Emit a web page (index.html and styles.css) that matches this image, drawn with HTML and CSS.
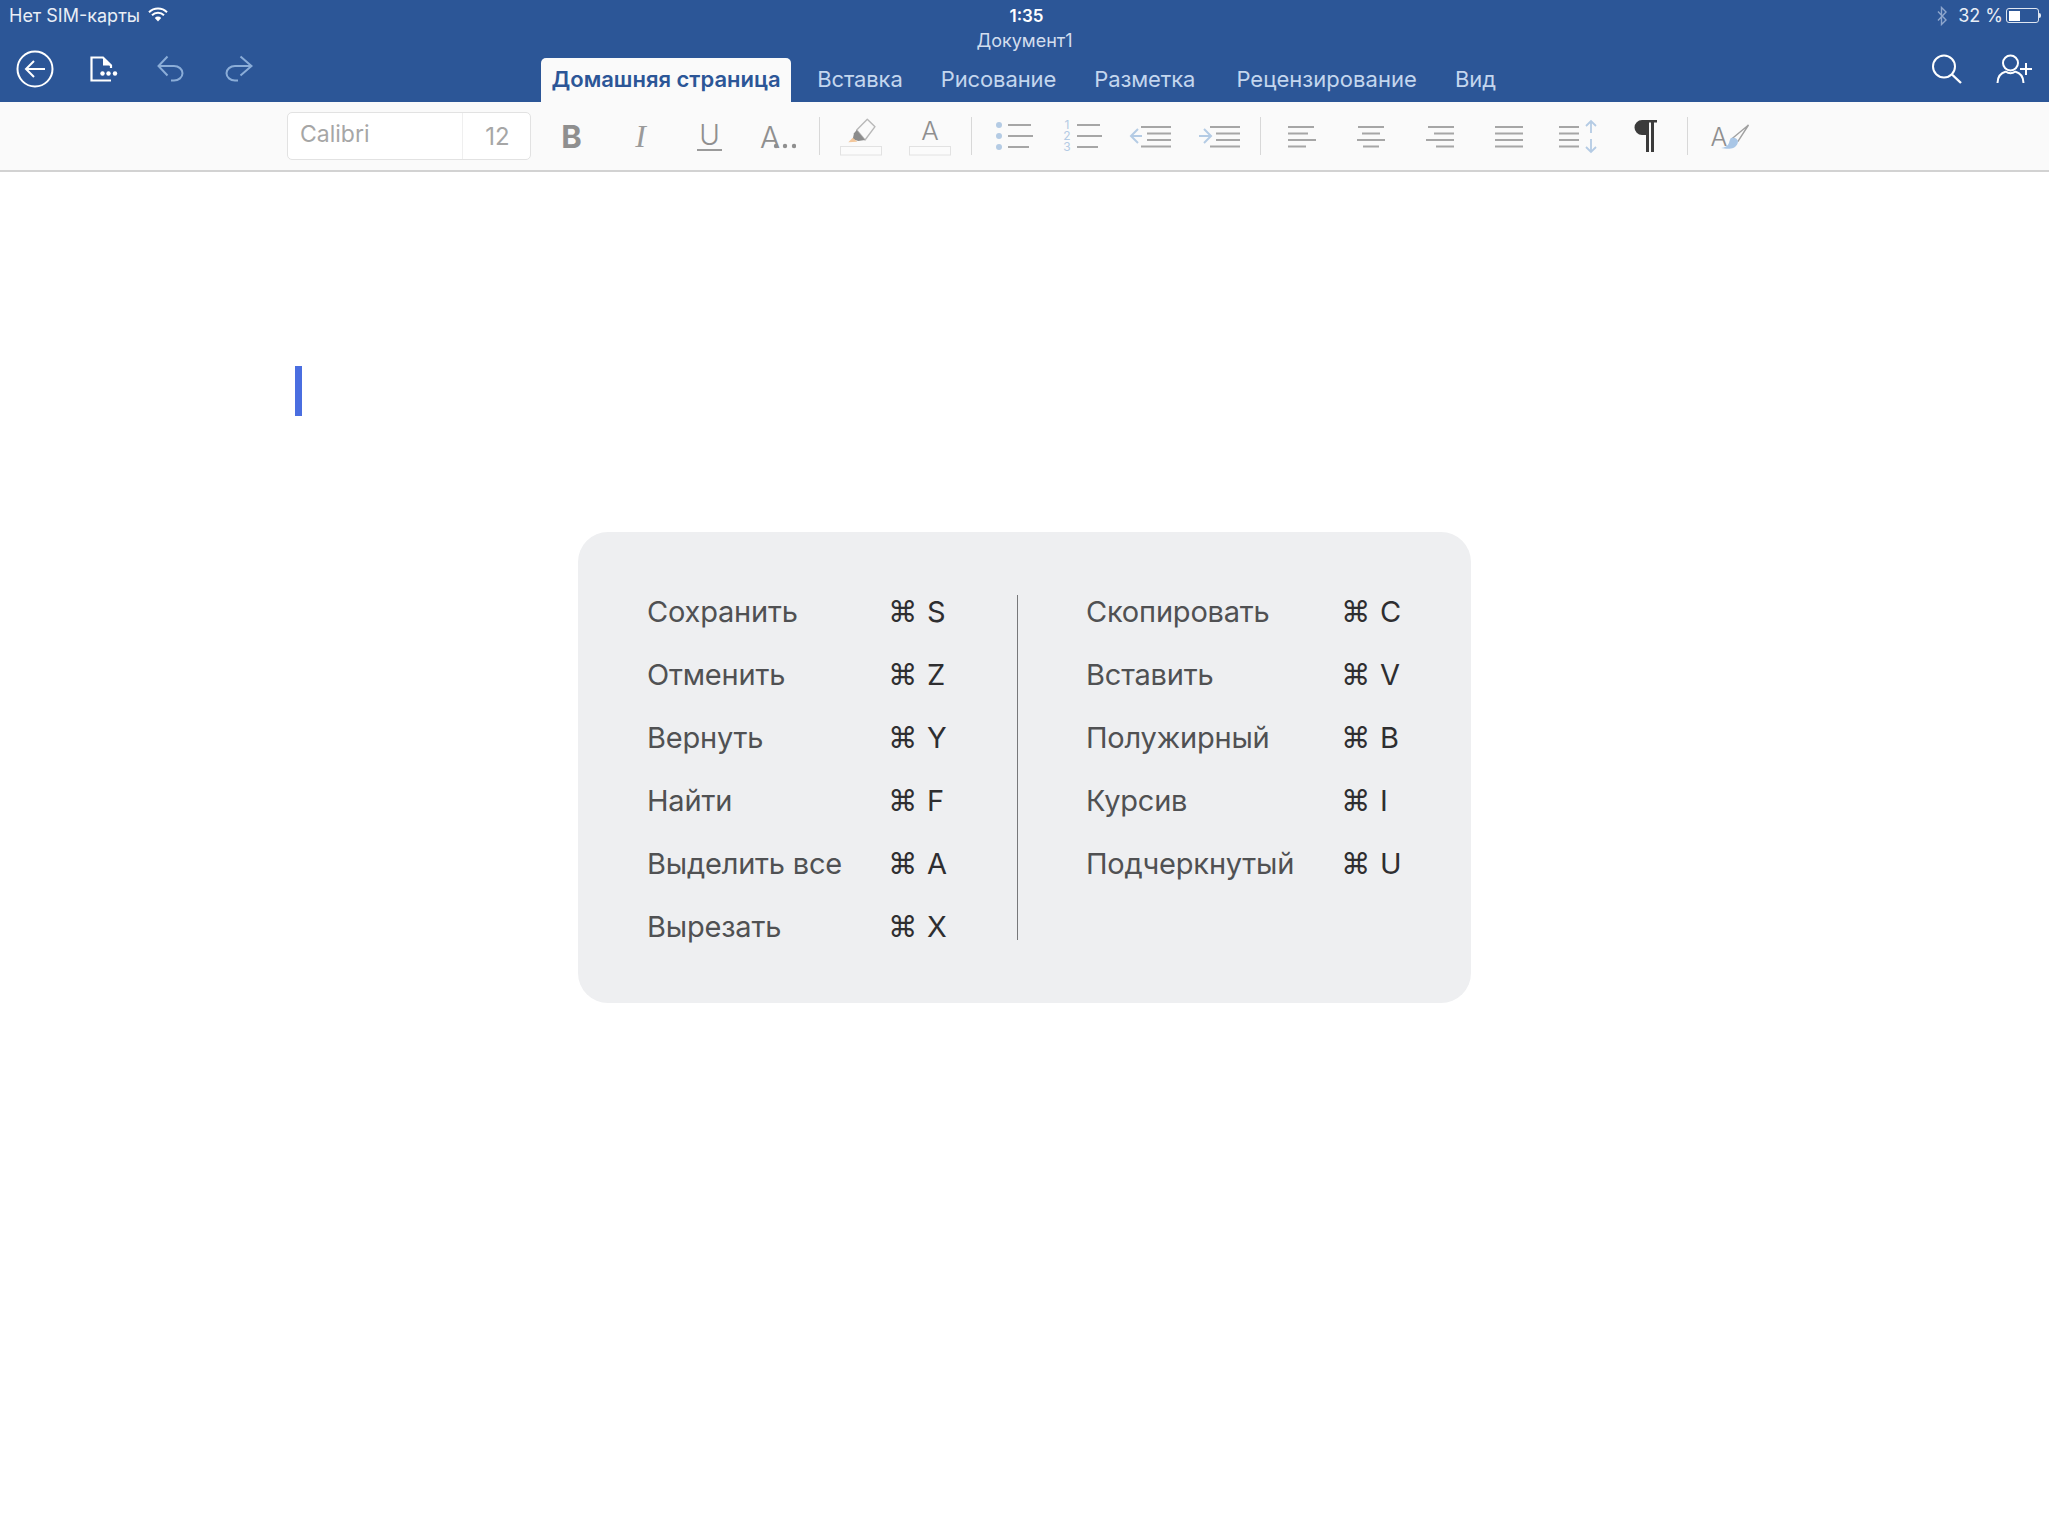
FILE: index.html
```html
<!DOCTYPE html>
<html lang="ru">
<head>
<meta charset="utf-8">
<title>Документ1</title>
<link rel="stylesheet" href="styles.css">
</head>
<body>
<header class="header">
  <div class="status">
    <div class="status-left">
      <span>Нет SIM-карты</span>
      <svg class="wifi" viewBox="0 0 20 15"><path d="M1 5.2a13 13 0 0 1 18 0" fill="none" stroke="#fff" stroke-width="2"/><path d="M4 8.2a8.6 8.6 0 0 1 12 0" fill="none" stroke="#fff" stroke-width="2"/><path d="M6.8 11a4.4 4.4 0 0 1 6.4 0L10 14.6z" fill="#fff"/></svg>
    </div>
    <div class="status-time">1:35</div>
    <div class="status-right">
      <svg class="bt" viewBox="0 0 12 20"><path d="M2 5.5l8 8.5-4.5 4.5V1.500L10 6l-8 8.500" fill="none" stroke="#8ea6cc" stroke-width="1.400"/></svg>
      <span class="pct">32 %</span>
      <div class="battery"><div class="battery-level"></div></div>
      <div class="battery-nub"></div>
    </div>
  </div>
  <div class="doc-title">Документ1</div>
  <nav class="nav">
    <div class="nav-left">
      <svg class="ic-back" viewBox="0 0 38 38"><circle cx="19" cy="19" r="17.500" fill="none" stroke="#fff" stroke-width="2"/><path d="M29 19H10M18 11l-8 8 8 8" fill="none" stroke="#fff" stroke-width="2"/></svg>
      <svg class="ic-file" viewBox="0 0 30 26"><path d="M21 24.500H1.500V1.500H13L21 9.500V12" fill="none" stroke="#fff" stroke-width="2.200"/><path d="M13 1.500L21 9.500H13z" fill="#fff"/><circle cx="12.500" cy="17.500" r="2.200" fill="#fff"/><circle cx="18.500" cy="17.500" r="2.200" fill="#fff"/><circle cx="25" cy="17.500" r="2.200" fill="#fff"/></svg>
      <svg class="ic-undo" viewBox="0 0 28 27"><path d="M10.500 1.500L1.500 11l9 9.500M1.500 11H17a8.500 7.250 0 0 1 0 14.500h-3" fill="none" stroke="#8badd8" stroke-width="2"/></svg>
      <svg class="ic-redo" viewBox="0 0 28 27"><path d="M15.500 1.500L26.500 11l-11 9.500M26.500 11H10a8.500 7.250 0 0 0 0 14.500h3" fill="none" stroke="#8badd8" stroke-width="2"/></svg>
    </div>
    <div class="tabs">
      <div class="tab tab-active">Домашняя страница</div>
      <div class="tab">Вставка</div>
      <div class="tab">Рисование</div>
      <div class="tab">Разметка</div>
      <div class="tab tab-wide">Рецензирование</div>
      <div class="tab">Вид</div>
    </div>
    <div class="nav-right">
      <svg class="ic-search" viewBox="0 0 32 30"><circle cx="13" cy="12.500" r="11" fill="none" stroke="#fff" stroke-width="2"/><path d="M21 20.500l9 8.500" fill="none" stroke="#fff" stroke-width="2.400"/></svg>
      <svg class="ic-person" viewBox="0 0 37 30"><circle cx="14.500" cy="9" r="7.500" fill="none" stroke="#fff" stroke-width="2"/><path d="M1.500 29c0-7 3-10 8.500-11.500M27.500 29c0-7-3-10-8.500-11.500M9.500 17.500c3 2 7 2 10 0" fill="none" stroke="#fff" stroke-width="2"/><path d="M24 15h12M30 9v12" fill="none" stroke="#fff" stroke-width="2"/></svg>
    </div>
  </nav>
</header>

<div class="toolbar">
  <div class="fontbox">
    <div class="fontname">Calibri</div>
    <div class="fontsize">12</div>
  </div>
  <div class="btn t-bold">B</div>
  <div class="btn t-italic">I</div>
  <div class="btn"><span class="t-under">U</span></div>
  <div class="btn t-more"><span>A</span><svg class="dots" viewBox="0 0 24 6"><circle cx="4" cy="3" r="2.200"/><circle cx="13" cy="3" r="2.200"/><circle cx="22" cy="3" r="2.200"/></svg></div>
  <div class="sep"></div>
  <div class="btn">
    <svg class="ic" viewBox="0 0 44 44"><path d="M28.300 5.300L36 12.700 26 26 17.700 16z" fill="#fafafa" stroke="#b8b8b8" stroke-width="1.400" stroke-linejoin="round"/><path d="M17.700 16L26 26l-6.700 1-5.600-1.700 1.300-6z" fill="#8c8c8c"/><path d="M9.300 28.300l4.400-4.600 4.600 4z" fill="#f3c79c"/><rect x="1.500" y="32.500" width="41" height="8.500" fill="#fbfbfb" stroke="#e2e2e2"/></svg>
  </div>
  <div class="btn">
    <svg class="ic" viewBox="0 0 44 44"><text class="svg-a" x="22" y="26" text-anchor="middle">A</text><rect x="1.500" y="32.500" width="41" height="8.500" fill="#fbfbfb" stroke="#e2e2e2"/></svg>
  </div>
  <div class="sep sep-wide"></div>
  <div class="btn">
    <svg class="ic" viewBox="0 0 44 44"><g fill="#b4cbe4"><circle cx="8" cy="11" r="3"/><circle cx="8" cy="22" r="3"/><circle cx="8" cy="33" r="3"/></g><path d="M17 11h23M17 22h25M17 33h21" stroke="#a6a6a6" stroke-width="2"/></svg>
  </div>
  <div class="btn">
    <svg class="ic" viewBox="0 0 44 44"><g class="svg-num"><text x="7" y="15" text-anchor="middle">1</text><text x="7" y="26" text-anchor="middle">2</text><text x="7" y="37" text-anchor="middle">3</text></g><path d="M17 11h23M17 22h25M17 33h21" stroke="#a6a6a6" stroke-width="2"/></svg>
  </div>
  <div class="btn">
    <svg class="ic" viewBox="0 0 44 44"><path d="M13 22H2M9 15l-7 7 7 7" fill="none" stroke="#b4cbe4" stroke-width="2"/><path d="M12 13h30M18 19.500h24M18 26h24M12 32.500h30" stroke="#a6a6a6" stroke-width="2"/></svg>
  </div>
  <div class="btn">
    <svg class="ic" viewBox="0 0 44 44"><path d="M1 22h11M6 15l7 7-7 7" fill="none" stroke="#b4cbe4" stroke-width="2"/><path d="M12 13h30M18 19.500h24M18 26h24M12 32.500h30" stroke="#a6a6a6" stroke-width="2"/></svg>
  </div>
  <div class="sep"></div>
  <div class="btn">
    <svg class="ic" viewBox="0 0 44 44"><path d="M8 13h26M8 19.500h20M8 26h28M8 32.500h18" stroke="#a6a6a6" stroke-width="2"/></svg>
  </div>
  <div class="btn">
    <svg class="ic" viewBox="0 0 44 44"><path d="M9 13h26M13 19.500h18M8 26h28M14 32.500h16" stroke="#a6a6a6" stroke-width="2"/></svg>
  </div>
  <div class="btn">
    <svg class="ic" viewBox="0 0 44 44"><path d="M10 13h26M16 19.500h20M8 26h28M18 32.500h18" stroke="#a6a6a6" stroke-width="2"/></svg>
  </div>
  <div class="btn">
    <svg class="ic" viewBox="0 0 44 44"><path d="M8 13h28M8 19.500h28M8 26h28M8 32.500h28" stroke="#a6a6a6" stroke-width="2"/></svg>
  </div>
  <div class="btn">
    <svg class="ic" viewBox="0 0 44 44"><path d="M3 13h20M3 19.500h20M3 26h20M3 32.500h20" stroke="#a6a6a6" stroke-width="2"/><path d="M35 19V7M30 12l5-5 5 5M35 25v13M30 33l5 5 5-5" fill="none" stroke="#b4cbe4" stroke-width="1.800"/></svg>
  </div>
  <div class="btn">
    <svg class="ic" viewBox="0 0 44 44"><path d="M23 6h-6a7.500 7.500 0 0 0 0 15h4v17h3V8.500h2V38h3V8.500h3V6z" fill="#3b3b3b"/></svg>
  </div>
  <div class="sep"></div>
  <div class="btn">
    <svg class="ic" viewBox="0 0 44 44"><text class="svg-a svg-a-style" x="3.500" y="31.700">A</text><path d="M24 25.500L41.500 11 30.800 27.700" fill="none" stroke="#a0a0a0" stroke-width="1.400"/><path d="M24 24c3-1 6 0 7 3 0 4-3 7-7 7.500-3 .500-7 0-10-.500 4-.500 7-2 8-5 .500-2 1-4 2-5z" fill="#a9c6e6"/></svg>
  </div>
</div>

<main class="page">
  <div class="caret"></div>
  <section class="card">
    <div class="col col-left">
      <div class="row"><span class="label">Сохранить</span><span class="cmd">⌘</span><span class="key">S</span></div>
      <div class="row"><span class="label">Отменить</span><span class="cmd">⌘</span><span class="key">Z</span></div>
      <div class="row"><span class="label">Вернуть</span><span class="cmd">⌘</span><span class="key">Y</span></div>
      <div class="row"><span class="label">Найти</span><span class="cmd">⌘</span><span class="key">F</span></div>
      <div class="row"><span class="label">Выделить все</span><span class="cmd">⌘</span><span class="key">A</span></div>
      <div class="row"><span class="label">Вырезать</span><span class="cmd">⌘</span><span class="key">X</span></div>
    </div>
    <div class="divider"></div>
    <div class="col col-right">
      <div class="row"><span class="label">Скопировать</span><span class="cmd">⌘</span><span class="key">C</span></div>
      <div class="row"><span class="label">Вставить</span><span class="cmd">⌘</span><span class="key">V</span></div>
      <div class="row"><span class="label">Полужирный</span><span class="cmd">⌘</span><span class="key">B</span></div>
      <div class="row"><span class="label">Курсив</span><span class="cmd">⌘</span><span class="key">I</span></div>
      <div class="row"><span class="label">Подчеркнутый</span><span class="cmd">⌘</span><span class="key">U</span></div>
    </div>
  </section>
</main>
</body>
</html>
```

FILE: styles.css
```css
* { box-sizing: border-box; }
html, body { margin: 0; padding: 0; background: #fff; }
body { width: 2049px; height: 1536px; overflow: hidden; font-family: Inter, "Noto Sans", sans-serif; }

.header { height: 102px; background: #2c5697; color: #fff; display: flex; flex-direction: column; }
.status { height: 31px; padding: 0 9px; display: grid; grid-template-columns: 1fr auto 1fr; align-items: center; font-size: 18px; }
.status-left { display: flex; align-items: center; gap: 8px; color: #e9eef6; }
.wifi { width: 20px; height: 15px; margin-top: -3px; }
.status-time { font-size: 17px; font-weight: 600; margin-left: 4px; }
.status-right { display: flex; align-items: center; justify-content: flex-end; }
.bt { width: 12px; height: 20px; margin-right: 10px; }
.pct { margin-right: 3px; color: #e9eef6; }
.battery { width: 33px; height: 15px; border: 1px solid #dfe6f1; border-radius: 3px; padding: 1.500px; }
.battery-level { width: 11px; height: 100%; background: #fff; }
.battery-nub { width: 2px; height: 5px; background: #dfe6f1; border-radius: 0 2px 2px 0; margin-right: -1px; }

.doc-title { height: 19px; line-height: 19px; text-align: center; font-size: 18px; color: #d3deee; }
.nav { height: 52px; display: flex; align-items: flex-end; }
.nav-left { width: 541px; height: 52px; display: flex; align-items: center; padding: 0 0 15px 16px; }
.ic-back { width: 38px; height: 38px; }
.ic-file { width: 30px; height: 26px; margin-left: 36px; }
.ic-undo { width: 28px; height: 27px; margin-left: 37px; }
.ic-redo { width: 28px; height: 27px; margin-left: 40px; }

.tabs { display: flex; gap: 16px; align-items: flex-end; font-size: 22px; color: #c4d6ee; }
.tab { height: 44px; line-height: 43px; padding: 0 11px; white-space: nowrap; letter-spacing: -0.1px; }
.tab-active { background: #fafafa; color: #2c5697; font-weight: 600; border-radius: 5px 5px 0 0; padding: 0 10.500px; margin-right: -1px; letter-spacing: 0; }
.tab-wide { margin-left: 3px; letter-spacing: 0.05px; }
.nav-right { margin-left: auto; height: 52px; display: flex; align-items: center; padding: 0 16px 15px 0; }
.ic-search { width: 32px; height: 30px; }
.ic-person { width: 37px; height: 30px; margin-left: 33px; }

.toolbar { height: 70px; background: #fafafa; border-bottom: 2px solid #d2d2d2; display: flex; align-items: center; padding: 0 0 0 287px; }
.fontbox { width: 244px; height: 48px; margin-right: 6px; display: flex; background: #fff; border: 1px solid #e2e2e2; border-radius: 5px; color: #a6a6a6; font-size: 24px; }
.fontname { flex: 1; padding: 7px 0 0 12px; border-right: 1px solid #efefef; font-size: 23px; }
.fontsize { width: 67px; padding: 9px 0 0 2px; text-align: center; }
.btn { width: 69px; height: 48px; display: flex; align-items: center; justify-content: center; color: #8f8f8f; }
.sep { width: 13px; height: 38px; flex: none; }
.sep-wide { width: 14px; }
.sep::after { content: ""; display: block; width: 1px; height: 100%; margin: 0 auto; background: #d8d8d8; }
.ic { width: 44px; height: 44px; }
.t-bold { font-size: 31px; font-weight: 700; }
.t-italic { font-family: "Liberation Serif", serif; font-style: italic; font-size: 32px; color: #9a9a9a; }
.t-under { font-size: 28px; font-weight: 300; border-bottom: 2px solid #9a9a9a; line-height: 28px; padding: 0 2px; }
.t-more { font-size: 30px; font-weight: 300; align-items: flex-end; justify-content: flex-start; padding: 0 0 5px 16px; }
.t-more span { line-height: 36px; }
.dots { width: 24px; height: 6px; fill: #8f8f8f; margin: 0 0 6px -8px; flex: none; }
.svg-a { font-family: Inter, sans-serif; font-size: 26px; font-weight: 300; fill: #8f8f8f; }
.svg-a-style { font-size: 25px; }
.svg-num { font-family: Inter, sans-serif; font-size: 12px; fill: #b4cbe4; }

.page { display: flow-root; }
.caret { width: 7px; height: 50px; margin: 194px 0 0 295px; background: #4a6ee0; }
.card { width: 893px; height: 471px; margin: 116px 0 0 578px; padding: 48px 0 0 69px; display: flex; background: #eeeff1; border-radius: 30px; }
.col-left { width: 370px; }
.col-right { margin-left: 68px; }
.divider { width: 1px; height: 345px; margin-top: 15px; background: #77787a; }
.row { height: 63px; display: flex; align-items: center; font-size: 29px; color: #505153; }
.label { white-space: nowrap; letter-spacing: -0.2px; }
.col-left .label { width: 241px; }
.col-right .label { width: 255px; }
.cmd { width: 39px; font-family: "DejaVu Sans", sans-serif; font-size: 29px; color: #2e2e30; }
.key { color: #2e2e30; }
```
